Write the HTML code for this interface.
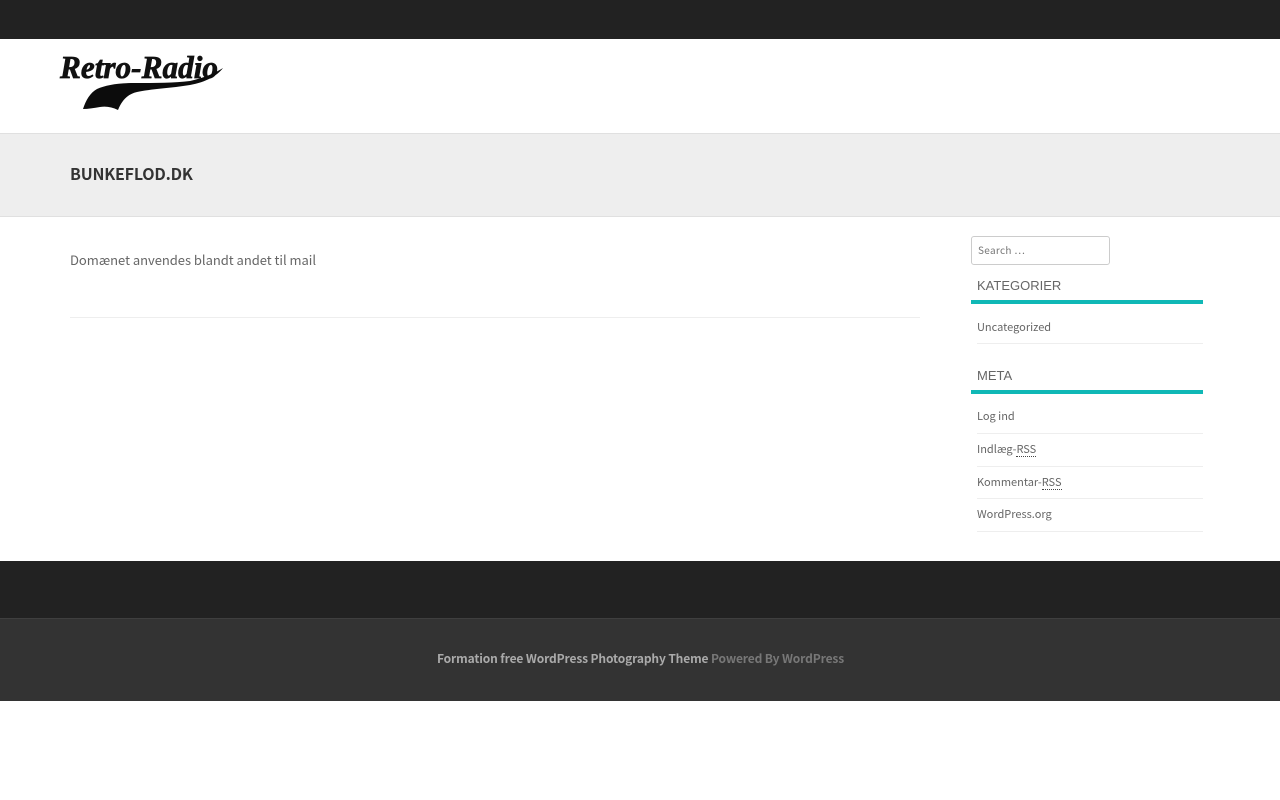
<!DOCTYPE html>
<html lang="da">
<head>
<meta charset="utf-8">
<title>bunkeflod.dk</title>
<style>
html,body{margin:0;padding:0;background:#fff;}
body{position:relative;width:1280px;height:800px;overflow:hidden;font-family:"Noto Sans CJK JP","Liberation Sans",sans-serif;color:#666;}
.b{position:absolute;left:0;width:1280px;}
.t{position:absolute;white-space:nowrap;line-height:16px;}
.r{position:absolute;left:977px;width:226px;height:1px;background:#eee;}
.bar{position:absolute;left:971px;width:232px;height:4px;background:#10b8b6;}
.h{font-family:"Liberation Sans",sans-serif;font-size:13px;color:#666;left:977px;}
.l{font-size:11px;color:#666;left:977px;}
abbr{text-decoration:none;border-bottom:1px dotted #444;line-height:12px;padding-bottom:1px;display:inline-block;}
</style>
</head>
<body>
<div class="b" style="top:0;height:39px;background:#222;"></div>
<svg style="position:absolute;left:55px;top:45px" width="175" height="70" viewBox="55 45 175 70">
<text x="60" y="78" font-family="Liberation Serif" font-style="italic" font-weight="bold" font-size="32" textLength="158" lengthAdjust="spacingAndGlyphs" fill="#111" stroke="#111" stroke-width="0.7">Retro-Radio</text>
<path d="M83 109C86 100 90 93 97 89C106 85 118 83 135 83C155 83 175 83 190 81C204 78 215 73 223 68C217 76 206 82 190 85C172 88 150 89 137 92C128 94 122 100 118 110C112 107 106 106 100 107C94 108 88 109 83 109Z" fill="#0c0c0c"/>
</svg>
<div class="b" style="top:133px;height:82px;background:#eee;border-top:1px solid #e0e0e0;border-bottom:1px solid #e0e0e0;"></div>
<div class="t" style="left:70px;top:164px;font-size:16px;font-weight:700;color:#333;line-height:18px;letter-spacing:-.2px;">BUNKEFLOD.DK</div>
<div class="t" style="left:70px;top:252px;font-size:13px;color:#666;letter-spacing:-.03px;">Domænet anvendes blandt andet til mail</div>
<div style="position:absolute;left:70px;top:317px;width:850px;height:1px;background:#eee;"></div>

<div style="position:absolute;left:971px;top:236px;width:137px;height:27px;border:1px solid #ccc;border-radius:3px;"></div>
<div class="t" style="left:978px;top:242px;font-size:10px;color:#777;letter-spacing:.3px;">Search …</div>

<div class="t h" style="top:278px;">KATEGORIER</div>
<div class="bar" style="top:300px;"></div>
<div class="t l" style="top:319px;">Uncategorized</div>
<div class="r" style="top:343px;"></div>

<div class="t h" style="top:368px;">META</div>
<div class="bar" style="top:390px;"></div>
<div class="t l" style="top:408px;">Log ind</div>
<div class="r" style="top:433px;"></div>
<div class="t l" style="top:441px;">Indlæg-<abbr>RSS</abbr></div>
<div class="r" style="top:466px;"></div>
<div class="t l" style="top:474px;">Kommentar-<abbr>RSS</abbr></div>
<div class="r" style="top:498px;"></div>
<div class="t l" style="top:506px;">WordPress.org</div>
<div class="r" style="top:531px;"></div>

<div class="b" style="top:561px;height:57px;background:#222;"></div>
<div class="b" style="top:618px;height:82px;background:#333;border-top:1px solid #3f3f3f;"></div>
<div class="t" style="left:437px;top:651px;font-size:12px;font-weight:700;color:#aaa;letter-spacing:-.13px;">Formation free WordPress Photography Theme <span style="color:#777;">Powered By WordPress</span></div>
</body>
</html>
